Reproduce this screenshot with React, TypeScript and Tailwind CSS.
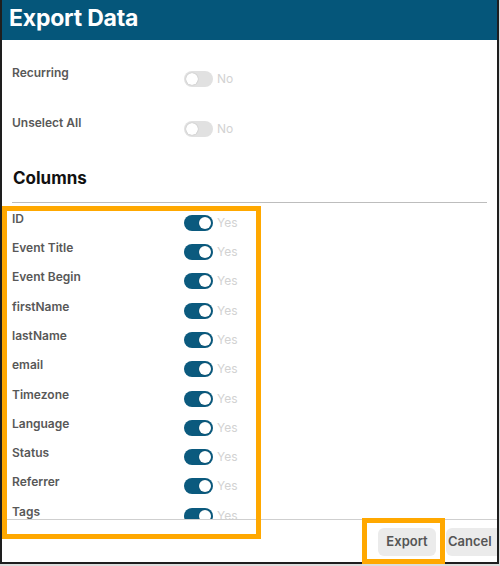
import React from "react";

const columns = [
  "ID",
  "Event Title",
  "Event Begin",
  "firstName",
  "lastName",
  "email",
  "Timezone",
  "Language",
  "Status",
  "Referrer",
  "Tags",
];

function Toggle({ on }: { on: boolean }) {
  return (
    <div className="flex items-center gap-[4px]">
      <div
        className={
          on
            ? "w-[29px] h-[16px] rounded-full bg-[#0b5a7e] flex items-center justify-end px-[2px]"
            : "w-[29px] h-[16px] rounded-full bg-[#e1e1e1] flex items-center justify-start px-[2px]"
        }
      >
        <div className="w-[12px] h-[12px] rounded-full bg-white shadow-[0_0_1px_rgba(0,0,0,0.35)]" />
      </div>
      <span className="text-[12px] leading-[16px] text-[#d2d2d2]">{on ? "Yes" : "No"}</span>
    </div>
  );
}

export default function App() {
  return (
    <div
      className="relative w-[500px] h-[566px] bg-[#dcdcdc] overflow-hidden"
      style={{ fontFamily: "Inter, 'Noto Sans', sans-serif" }}
    >
      <div className="w-[499px] h-[564px] bg-white border-l-2 border-r-2 border-b-2 border-[#1e1e1e] flex flex-col">
        <div className="h-[40px] shrink-0 bg-[#05567a] flex items-center pl-[7px] pb-[4px]">
          <h1 className="text-[23px] font-bold text-white leading-[28px] tracking-[-0.2px]">Export Data</h1>
        </div>
        <div className="h-[479px] shrink-0 overflow-hidden px-[10px] pt-[31px]">
          <div className="h-[50px] flex items-start">
            <span className="w-[172px] -mt-[6px] text-[12px] leading-[16px] font-semibold text-[#585858]">Recurring</span>
            <Toggle on={false} />
          </div>
          <div className="h-[16px] flex items-start">
            <span className="w-[172px] -mt-[6px] text-[12px] leading-[16px] font-semibold text-[#585858]">Unselect All</span>
            <Toggle on={false} />
          </div>
          <h2 className="mt-[30.5px] pl-[1px] text-[17px] leading-[21px] font-bold text-[#111]">Columns</h2>
          <div className="mt-[13px] border-t border-[#bdbdbd]" />
          <div className="mt-[12.3px]">
            {columns.map((c) => (
              <div key={c} className="h-[29.3px] flex items-start">
                <span className="w-[172px] -mt-[4px] text-[12px] leading-[16px] font-semibold text-[#585858]">{c}</span>
                <Toggle on={true} />
              </div>
            ))}
          </div>
        </div>
        <div className="flex-1 border-t border-[#cfcfcf] flex items-start justify-end pt-[8px] gap-[10px] overflow-hidden">
          <button className="h-[28px] w-[58px] rounded-[6px] bg-[#ebebeb] text-[13px] font-semibold text-[#555]">
            Export
          </button>
          <button className="h-[28px] w-[51px] rounded-l-[6px] bg-[#ebebeb] text-[13px] font-semibold text-[#555] text-left pl-[2px]">
            Cancel
          </button>
        </div>
      </div>
      <div className="absolute left-[2px] top-[206px] w-[259px] h-[333px] border-[5px] border-[#ffa800]" />
      <div className="absolute left-[362px] top-[518px] w-[83px] h-[46px] border-[5px] border-[#ffa800]" />
    </div>
  );
}
